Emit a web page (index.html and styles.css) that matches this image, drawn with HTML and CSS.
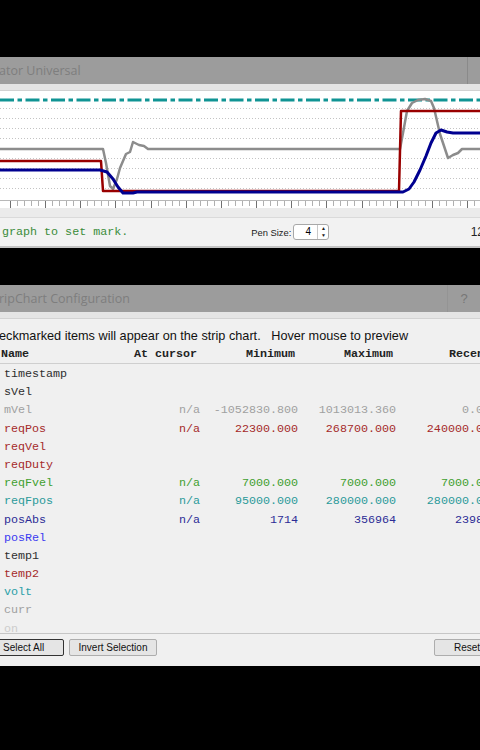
FILE: index.html
```html
<!DOCTYPE html>
<html>
<head>
<meta charset="utf-8">
<link rel="stylesheet" href="styles.css">
</head>
<body>
<div class="gap-top"></div>
<section class="win">
  <div class="titlebar"><span class="title">ator Universal</span><span class="tb-btn"></span></div>
  <div class="strip"></div>
  <div class="chart">
    <svg width="480" height="117" viewBox="0 0 480 117">
      <g stroke="#c4c4c4" stroke-width="1" stroke-dasharray="1 2">
        <line x1="0" y1="17.5" x2="480" y2="17.5"/>
        <line x1="0" y1="27.5" x2="480" y2="27.5"/>
        <line x1="0" y1="37.5" x2="480" y2="37.5"/>
        <line x1="0" y1="47.5" x2="480" y2="47.5"/>
        <line x1="0" y1="67.5" x2="480" y2="67.5"/>
        <line x1="0" y1="77.5" x2="480" y2="77.5"/>
        <line x1="0" y1="87.5" x2="480" y2="87.5"/>
        <line x1="0" y1="97.5" x2="480" y2="97.5"/>
      </g>
      <line x1="0" y1="9" x2="480" y2="9" stroke="#109494" stroke-width="3" stroke-dasharray="14 3.5 4.5 3.5"/>
      <polyline fill="none" stroke="#8c8c8c" stroke-width="2.5" stroke-linejoin="round" points="0,58 103,58 106,72 110,95 113,98 117,88 120,77 126,63 130,61 133,51 139,54 144,55 148,58 400,58 403,42 407,20 412,12 418,9 425,8 431,10 434,17 440,43 448,67 453,64 458,62 462,58 480,58"/>
      <polyline fill="none" stroke="#990000" stroke-width="2.5" stroke-linejoin="round" points="0,70 101,70 103,100 399,100 401,20 480,20"/>
      <polyline fill="none" stroke="#000090" stroke-width="3" stroke-linejoin="round" points="0,79 100,79 107,81 113,88 118,96 123,102 133,102 137,101 403,101 409,98 414,91 420,79 426,65 431,52 436,42 441,39 447,41 453,42 480,42"/>
      <line x1="0" y1="109.5" x2="480" y2="109.5" stroke="#b8b8b8" stroke-width="1"/>
      <g id="ticks" stroke="#b0b0b0" stroke-width="1"></g>
    </svg>
  </div>
  <div class="band"></div>
  <div class="status">
    <span class="hint">graph to set mark.</span>
    <span class="pen">Pen Size:</span>
    <span class="spin"><span class="spin-val">4</span><span class="spin-btns"><span class="up">&#9650;</span><span class="dn">&#9660;</span></span></span>
    <span class="count">12</span>
  </div>
</section>
<div class="gap-mid"></div>
<section class="dlg">
  <div class="titlebar"><span class="title">ripChart Configuration</span><span class="tb-btn q">?</span></div>
  <div class="strip"></div>
  <div class="content">
    <p class="intro">heckmarked items will appear on the strip chart.&nbsp;&nbsp; Hover mouse to preview</p>
    <div class="grid head">
      <span class="c-name">Name</span><span class="c-num">At cursor</span><span class="c-num">Minimum</span><span class="c-num">Maximum</span><span class="c-num last">Recent</span>
    </div>
    <div class="rows">
      <div class="grid row dark"><span class="c-name">timestamp</span><span></span><span></span><span></span><span></span></div>
      <div class="grid row dark"><span class="c-name">sVel</span><span></span><span></span><span></span><span></span></div>
      <div class="grid row gray"><span class="c-name">mVel</span><span class="c-num">n/a</span><span class="c-num">-1052830.800</span><span class="c-num">1013013.360</span><span class="c-num">0.000</span></div>
      <div class="grid row red"><span class="c-name">reqPos</span><span class="c-num">n/a</span><span class="c-num">22300.000</span><span class="c-num">268700.000</span><span class="c-num">240000.000</span></div>
      <div class="grid row red"><span class="c-name">reqVel</span><span></span><span></span><span></span><span></span></div>
      <div class="grid row red"><span class="c-name">reqDuty</span><span></span><span></span><span></span><span></span></div>
      <div class="grid row green"><span class="c-name">reqFvel</span><span class="c-num">n/a</span><span class="c-num">7000.000</span><span class="c-num">7000.000</span><span class="c-num">7000.000</span></div>
      <div class="grid row teal"><span class="c-name">reqFpos</span><span class="c-num">n/a</span><span class="c-num">95000.000</span><span class="c-num">280000.000</span><span class="c-num">280000.000</span></div>
      <div class="grid row navy"><span class="c-name">posAbs</span><span class="c-num">n/a</span><span class="c-num">1714</span><span class="c-num">356964</span><span class="c-num">239837</span></div>
      <div class="grid row blue"><span class="c-name">posRel</span><span></span><span></span><span></span><span></span></div>
      <div class="grid row dark"><span class="c-name">temp1</span><span></span><span></span><span></span><span></span></div>
      <div class="grid row red"><span class="c-name">temp2</span><span></span><span></span><span></span><span></span></div>
      <div class="grid row teal2"><span class="c-name">volt</span><span></span><span></span><span></span><span></span></div>
      <div class="grid row gray"><span class="c-name">curr</span><span></span><span></span><span></span><span></span></div>
      <div class="grid row faint"><span class="c-name">on</span><span></span><span></span><span></span><span></span></div>
    </div>
    <div class="buttons">
      <button class="btn sel focus">Select All</button>
      <button class="btn inv">Invert Selection</button>
      <span class="spacer"></span>
      <button class="btn reset">Reset Colors</button>
    </div>
  </div>
</section>
<script>
  var g = document.getElementById('ticks');
  var ns = 'http://www.w3.org/2000/svg';
  var start = 45 - 35.17 * 1;
  for (var i = 0; i < 75; i++) {
    var x = start + i * 35.17 / 5;
    if (x < 0 || x > 480) continue;
    var major = (i % 5 === 0);
    var l = document.createElementNS(ns, 'line');
    var xx = Math.round(x) + 0.5;
    l.setAttribute('x1', xx); l.setAttribute('x2', xx);
    l.setAttribute('y1', 110); l.setAttribute('y2', major ? 117 : 115);
    if (major) l.setAttribute('stroke', '#707070');
    g.appendChild(l);
  }
</script>
</body>
</html>
```

FILE: styles.css
```css
html, body {
  margin: 0;
  padding: 0;
  background: #000;
  width: 480px;
  height: 750px;
  overflow: hidden;
  font-family: "Liberation Sans", Arial, sans-serif;
}
.gap-top { height: 57px; }
.gap-mid { height: 37px; }

.titlebar {
  height: 27px;
  background: #9c9c9c;
  display: flex;
  align-items: center;
  position: relative;
}
.title {
  color: #7e7e7e;
  font-family: "Open Sans", "Liberation Sans", sans-serif;
  font-size: 12.5px;
  margin-left: -1px;
}
.tb-btn {
  margin-left: auto;
  width: 12px;
  height: 27px;
  border-left: 1px solid #8a8a8a;
}
.tb-btn.q {
  width: 32px;
  color: #777;
  font-size: 13px;
  display: flex;
  align-items: center;
  justify-content: center;
  border-left: 1px solid #949494;
}
.strip {
  height: 6px;
  background: #e4e4e4;
  border-bottom: 1px solid #d2d2d2;
}
.chart {
  height: 117px;
  background: #fff;
  display: flex;
}
.chart svg { display: block; }
.band {
  height: 9px;
  background: #ebebeb;
  border-bottom: 1px solid #dadada;
}
.status {
  height: 28px;
  background: #f2f2f2;
  border-bottom: 2px solid #c4c4c4;
  display: flex;
  align-items: center;
}
.hint {
  font-family: "Liberation Mono", "Courier New", monospace;
  font-size: 11.7px;
  color: #3a8c3a;
  margin-left: 2px;
}
.pen {
  margin-left: 123px;
  font-size: 9.4px;
  color: #222;
}
.spin {
  margin-left: 2px;
  width: 34px;
  height: 14px;
  border: 1px solid #a8a8a8;
  border-radius: 3px;
  background: #fff;
  display: flex;
}
.spin-val {
  flex: 1;
  font-size: 10px;
  color: #000;
  padding-left: 11px;
  line-height: 14px;
}
.spin-btns {
  width: 10px;
  border-left: 1px solid #c8c8c8;
  display: flex;
  flex-direction: column;
  font-size: 5px;
  line-height: 7px;
  text-align: center;
  color: #222;
}
.count {
  margin-left: auto;
  margin-right: -4px;
  font-size: 12px;
  color: #222;
}

.dlg { background: #f0f0f0; }
.content {
  background: #f0f0f0;
  padding-top: 10px;
  height: 337px;
  overflow: hidden;
}
.intro {
  margin: 0 0 0 -8px;
  font-size: 12.7px;
  color: #111;
  line-height: 14px;
  white-space: nowrap;
}
.grid {
  display: grid;
  grid-template-columns: 130px 70px 98px 98px 101px;
  width: 497px;
  font-family: "Liberation Mono", "Courier New", monospace;
  font-size: 11.7px;
  white-space: nowrap;
}
.head {
  margin-top: 2px;
  height: 18px;
  line-height: 18px;
  font-weight: bold;
  color: #222;
  border-bottom: 1px solid #cfcfcf;
}
.head .c-name { padding-left: 1px; }
.head .c-num { padding-right: 3px; }
.head .c-num.last { padding-right: 6px; }
.c-num { text-align: right; }
.rows {
  height: 269px;
  overflow: hidden;
  border-bottom: 1px solid #c6c6c6;
}
.row {
  height: 18.2px;
  line-height: 18.2px;
}
.row .c-name { padding-left: 4px; }
.row:first-child { margin-top: 1px; }
.dark { color: #2e2e2e; }
.gray { color: #a0a0a0; }
.red { color: #a52a2a; }
.green { color: #3f9f2f; }
.teal { color: #2b9a9a; }
.teal2 { color: #2aa0a8; }
.navy { color: #2c2c96; }
.blue { color: #3b3bf0; }
.faint { color: #cdcdcd; }

.buttons {
  display: flex;
  align-items: center;
  margin-top: 5px;
  height: 17px;
}
.btn {
  font-family: "Liberation Sans", Arial, sans-serif;
  font-size: 10px;
  color: #111;
  background: #e5e5e5;
  border: 1px solid #adadad;
  border-radius: 2px;
  height: 17px;
  padding: 0;
  margin: 0;
}
.sel { width: 66px; margin-left: -2px; text-align: left; padding-left: 4px; }
.focus { border-color: #333; }
.inv { width: 88px; margin-left: 5px; }
.spacer { flex: 1; }
.reset { width: 80px; margin-right: -34px; text-align: left; padding-left: 19px; }
```
